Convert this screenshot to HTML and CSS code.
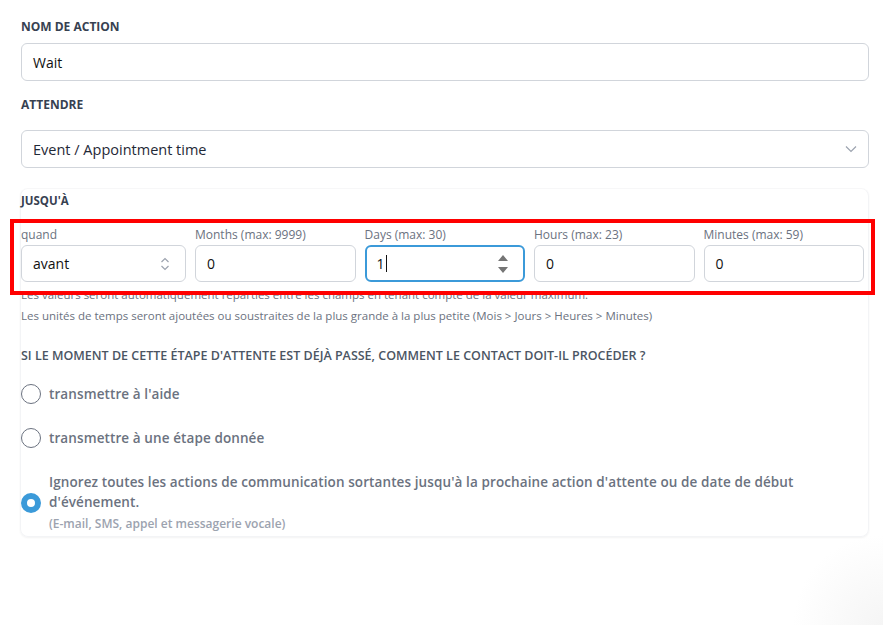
FILE: index.html
```html
<!DOCTYPE html>
<html lang="fr">
<head>
    <meta charset="UTF-8">
    <meta name="viewport" content="width=device-width, initial-scale=1.0">
    <title>Wait</title>
    <link rel="stylesheet" href="styles.css">
</head>
<body>
    <div class="panel">
        <label class="label">Nom de action</label>
        <div class="field">Wait</div>

        <label class="label label-gap">Attendre</label>
        <div class="field field-select">
            <span>Event / Appointment time</span>
            <svg class="chevron" width="12" height="8" viewBox="0 0 12 8"><path d="M1 1.5l5 5 5-5" fill="none" stroke="#9ca3af" stroke-width="1.2"/></svg>
        </div>

        <div class="card">
            <label class="label">Jusqu'à</label>

            <div class="time-row highlight">
                <div class="col">
                    <span class="sub-label">quand</span>
                    <div class="field small">
                        <span>avant</span>
                        <svg class="updown" width="10" height="14" viewBox="0 0 10 14"><path d="M1.5 5l3.5-3.5 3.5 3.5M1.5 9l3.5 3.5 3.5-3.5" fill="none" stroke="#9ca3af" stroke-width="1.2"/></svg>
                    </div>
                </div>
                <div class="col">
                    <span class="sub-label">Months (max: 9999)</span>
                    <div class="field small">0</div>
                </div>
                <div class="col">
                    <span class="sub-label">Days (max: 30)</span>
                    <div class="field small focused">
                        <span>1<i class="caret"></i></span>
                        <svg class="spin" width="12" height="22" viewBox="0 0 12 22"><path d="M6 2l5 6H1z M6 20l5-6H1z" fill="#757575"/></svg>
                    </div>
                </div>
                <div class="col">
                    <span class="sub-label">Hours (max: 23)</span>
                    <div class="field small">0</div>
                </div>
                <div class="col">
                    <span class="sub-label">Minutes (max: 59)</span>
                    <div class="field small">0</div>
                </div>
            </div>

            <p class="hint">Les valeurs seront automatiquement réparties entre les champs en tenant compte de la valeur maximum.</p>
            <p class="hint">Les unités de temps seront ajoutées ou soustraites de la plus grande à la plus petite (Mois &gt; Jours &gt; Heures &gt; Minutes)</p>

            <h4 class="question">Si le moment de cette étape d'attente est déjà passé, comment le contact doit-il procéder ?</h4>

            <div class="radio-list">
                <div class="radio">
                    <span class="dot"></span>
                    <span class="radio-text">transmettre à l'aide</span>
                </div>
                <div class="radio">
                    <span class="dot"></span>
                    <span class="radio-text">transmettre à une étape donnée</span>
                </div>
                <div class="radio radio-checked">
                    <span class="dot"></span>
                    <div class="radio-text">
                        Ignorez toutes les actions de communication sortantes jusqu'à la prochaine action d'attente ou de date de début d'événement.
                        <small>(E-mail, SMS, appel et messagerie vocale)</small>
                    </div>
                </div>
            </div>
        </div>
    </div>
</body>
</html>
```

FILE: styles.css
```css
body {
    font-family: 'Open Sans', sans-serif;
    background: radial-gradient(circle at 100% 100%, #f5f5f5, #fff 90px) no-repeat;
    background-color: #fff;
    color: #111827;
    margin: 0;
    height: 625px;
}
.panel {
    padding: 19px 14px 0 21px;
}
.label {
    display: block;
    font-size: 12px;
    line-height: 16px;
    font-weight: 700;
    text-transform: uppercase;
    color: #374151;
    margin-bottom: 8px;
}
.label-gap {
    margin-top: 16px;
    margin-bottom: 17px;
}
.field {
    height: 38px;
    box-sizing: border-box;
    border: 1px solid #d1d5db;
    border-radius: 6px;
    padding: 0 12px 0 11px;
    display: flex;
    align-items: center;
    justify-content: space-between;
    font-size: 14px;
    color: #111;
    background: #fff;
}
.field-select {
    font-size: 14.5px;
    color: #1f2937;
    padding-right: 11px;
}
.card {
    margin: 20px 0 0 -1px;
    padding: 4px 4px 0 0;
    height: 343px;
    border-radius: 8px;
    box-shadow: 0 1px 2px rgba(0, 0, 0, 0.05);
    border: 1px solid #f3f4f6;
    border-top-color: #f7f7f8;
}
.card .label {
    font-size: 11.5px;
    margin-bottom: 18px;
}
.time-row {
    display: grid;
    grid-template-columns: 165px repeat(4, 1fr);
    gap: 9px;
    position: relative;
}
.highlight::after {
    content: "";
    position: absolute;
    left: -11px;
    right: -11px;
    top: -8px;
    bottom: -13px;
    border: 4px solid #ff0000;
    pointer-events: none;
}
.sub-label {
    display: block;
    font-size: 12px;
    line-height: 16px;
    color: #6b7280;
    margin-bottom: 2px;
}
.field.small {
    height: 37px;
    font-size: 14px;
}
.focused {
    border: 2px solid #3b9ad9;
    padding-left: 10px;
    padding-right: 14px;
}
.caret {
    display: inline-block;
    width: 1px;
    height: 17px;
    background: #111;
    vertical-align: -3px;
    margin-left: 1px;
}
.updown {
    margin-right: 3px;
}
.hint {
    font-size: 11.5px;
    line-height: 21px;
    color: #6b7280;
    margin: 2px 0 0;
}
.hint + .hint {
    margin-top: 0;
}
.question {
    font-size: 12.5px;
    font-weight: 600;
    text-transform: uppercase;
    color: #4b5563;
    margin: 22px 0 0;
    line-height: 16px;
}
.radio-list {
    margin-top: 20px;
}
.radio {
    display: flex;
    align-items: center;
    gap: 8px;
    margin-bottom: 24px;
}
.dot {
    width: 20px;
    height: 20px;
    box-sizing: border-box;
    border: 1.5px solid #6b7280;
    border-radius: 50%;
    flex-shrink: 0;
}
.radio-text {
    font-size: 13.5px;
    letter-spacing: 0.1px;
    font-weight: 600;
    line-height: 20px;
    color: #6b7280;
}
.radio-checked {
    margin-top: 23px;
}
.radio-checked .dot {
    border: 6px solid #3b9ad9;
    background: #fff;
}
.radio-text small {
    display: block;
    font-size: 12px;
    letter-spacing: 0;
    color: #9ca3af;
    margin-top: 2px;
}
```
